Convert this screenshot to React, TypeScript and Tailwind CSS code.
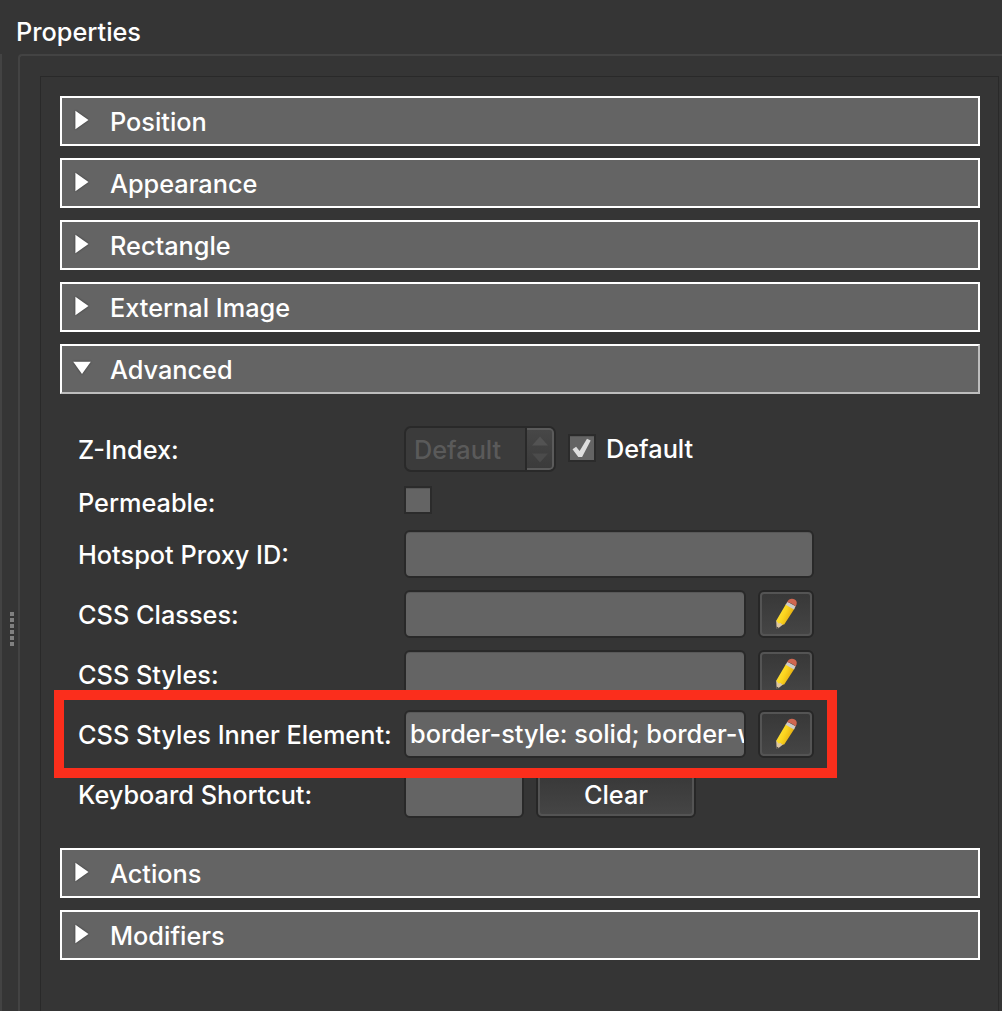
import type { ReactNode } from 'react';
import clsx from 'clsx';

function Arrow({ open }: { open?: boolean }) {
  return (
    <svg width="22" height="22" viewBox="0 0 22 22" className="drop-shadow-[0_0_1px_rgba(0,0,0,0.45)]">
      <path d={open ? 'M2.2 4.7h17.6L11 16.9z' : 'M4.4 1.8v18.4L17.5 11z'} fill="#fff" />
    </svg>
  );
}

function SectionBar({ title, open }: { title: string; open?: boolean }) {
  return (
    <div
      className={clsx(
        'flex h-[50px] items-center border-2 border-white bg-[#646464] pl-[9px]',
        open && 'border-r-[#bdbdbd] border-b-[#bdbdbd]',
      )}
    >
      <div className="mb-[2px]">
        <Arrow open={open} />
      </div>
      <span className="ml-[17px] pt-[2px]">{title}</span>
    </div>
  );
}

function Field({ className, children }: { className?: string; children?: ReactNode }) {
  return (
    <div
      className={clsx(
        'flex h-12 items-center overflow-hidden rounded-[6px] border-2 border-[#292929] bg-[#646464] pl-1 whitespace-nowrap shadow-[inset_0_1px_0_#585858]',
        className,
      )}
    >
      {children}
    </div>
  );
}

function Button({ className, children }: { className?: string; children: ReactNode }) {
  return (
    <div className={clsx('h-12 rounded-[6px] border-2 border-[#272727] bg-[#545454] p-[2px]', className)}>
      <div className="flex h-full items-center justify-center rounded-[2px] bg-linear-to-b from-[#383838] to-[#454545]">
        {children}
      </div>
    </div>
  );
}

function Pencil() {
  return (
    <svg width="24" height="32" viewBox="0 0 24 32">
      <defs>
        <linearGradient id="pencil-body" x1="0" y1="0" x2="1" y2="0.5">
          <stop offset="0" stopColor="#ffe94a" />
          <stop offset="0.55" stopColor="#fbd51f" />
          <stop offset="1" stopColor="#e0a510" />
        </linearGradient>
      </defs>
      <path d="M2.2 22.6 9.4 26.2 3.6 30.8 2.6 30.4z" fill="#dcc6a4" />
      <path d="M2.4 28.6 4.6 29.8 3 31.2z" fill="#3d3a3a" />
      <path d="M12 6 20.6 10.6 10.2 26.4 8.2 26.6 6.8 25 4.6 25.4 2.2 22.8z" fill="url(#pencil-body)" />
      <path d="M13.4 3.8 21.6 8.2 20 11.4 11.6 6.8z" fill="#cfcbc6" />
      <path d="M13.2 4.2C14.4.9 18 0 20.8 1.6c2.4 1.5 2.6 4.4.8 7.2-2.2-2.6-4.9-4.1-8.4-4.6z" fill="#cf6650" />
    </svg>
  );
}

function EditButton() {
  return (
    <Button className="w-14">
      <Pencil />
    </Button>
  );
}

function CheckBox({ checked }: { checked?: boolean }) {
  return (
    <div className="flex size-7 items-center justify-center border-2 border-[#2b2b2b] bg-[#646464] shadow-[inset_0_1px_0_#575757]">
      {checked && (
        <svg width="24" height="24" viewBox="0 0 24 24">
          <path d="M2.5 13.3 6.1 10.8 9.6 14.9 17 2.8 20.7 4.4 12.1 21H8.3z" fill="#dedede" />
        </svg>
      )}
    </div>
  );
}

function SpinBox() {
  return (
    <div className="flex h-[46px] w-[152px] overflow-hidden rounded-[7px] border-2 border-[#292929] bg-[#3b3b3b]">
      <span className="w-[121px] pt-[6px] pl-2 text-[#5a5a5a]">Default</span>
      <div className="flex flex-1 items-center justify-center rounded-r-[4px] border-y-2 border-r-2 border-[#5b5b5b] bg-linear-to-b from-[#474747] to-[#3b3b3b] shadow-[-2px_0_0_#292929]">
        <svg width="16" height="28" viewBox="0 0 16 28" fill="#535353">
          <path d="M0 10.5 8 1.5l8 9z" />
          <path d="M0 18.5h16l-8 9z" fill="#4b4b4b" />
        </svg>
      </div>
    </div>
  );
}

function Row({ label, className, children }: { label: string; className?: string; children: ReactNode }) {
  return (
    <div className={clsx('relative flex', className ?? 'h-12')}>
      <span className="flex w-[326px] shrink-0 items-center pt-[2px] whitespace-nowrap">{label}</span>
      <div className="flex gap-3">{children}</div>
    </div>
  );
}

function AdvancedForm() {
  return (
    <div className="mb-[30px] flex flex-col gap-3 pt-8 pl-[18px]">
      <Row label="Z-Index:" className="mb-[2px] h-[46px]">
        <SpinBox />
        <div className="flex h-11 items-center gap-[10px]">
          <CheckBox checked />
          <span className="pt-[1px]">Default</span>
        </div>
      </Row>
      <Row label="Permeable:" className="h-8">
        <CheckBox />
      </Row>
      <Row label="Hotspot Proxy ID:">
        <Field className="w-[410px]" />
      </Row>
      <Row label="CSS Classes:">
        <Field className="w-[342px]" />
        <EditButton />
      </Row>
      <Row label="CSS Styles:">
        <Field className="w-[342px]" />
        <EditButton />
      </Row>
      <Row label="CSS Styles Inner Element:" className="z-10 h-12">
        <Field className="w-[342px]">border-style: solid; border-width: 1px;</Field>
        <EditButton />
        {/* highlight frame */}
        <div className="absolute -top-5 -left-6 h-22 w-[783px] border-10 border-[#fb2e1c]" />
      </Row>
      <Row label="Keyboard Shortcut:">
        <Field className="w-[120px]" />
        <Button className="w-40">
          <span className="pt-[2px]">Clear</span>
        </Button>
      </Row>
    </div>
  );
}

export default function App() {
  return (
    <div className="flex h-[1011px] w-[1002px] flex-col overflow-hidden bg-[#353535] font-['Inter',sans-serif] text-[25.3px] leading-8 font-[450] text-white">
      <div className="h-[54px] shrink-0 pt-4 pl-4">Properties</div>
      <div className="flex flex-1">
        <div className="flex w-[18px] flex-col gap-[2px] border-l-2 border-[#434343] pt-[558px] pl-2">
          {[0, 1, 2, 3, 4, 5].map((i) => (
            <span key={i} className="size-1 bg-[#808080]" />
          ))}
        </div>
        <div className="flex flex-1 rounded-tl-[4px] border-t-2 border-l-2 border-[#434343] pt-5 pl-5">
          <div className="w-[959px] border border-b-0 border-[#292929] pt-[19px] pr-[18px] pl-[19px]">
            <div className="flex flex-col gap-3">
              <SectionBar title="Position" />
              <SectionBar title="Appearance" />
              <SectionBar title="Rectangle" />
              <SectionBar title="External Image" />
              <SectionBar title="Advanced" open />
            </div>
            <AdvancedForm />
            <div className="flex flex-col gap-3">
              <SectionBar title="Actions" />
              <SectionBar title="Modifiers" />
            </div>
          </div>
        </div>
      </div>
    </div>
  );
}
